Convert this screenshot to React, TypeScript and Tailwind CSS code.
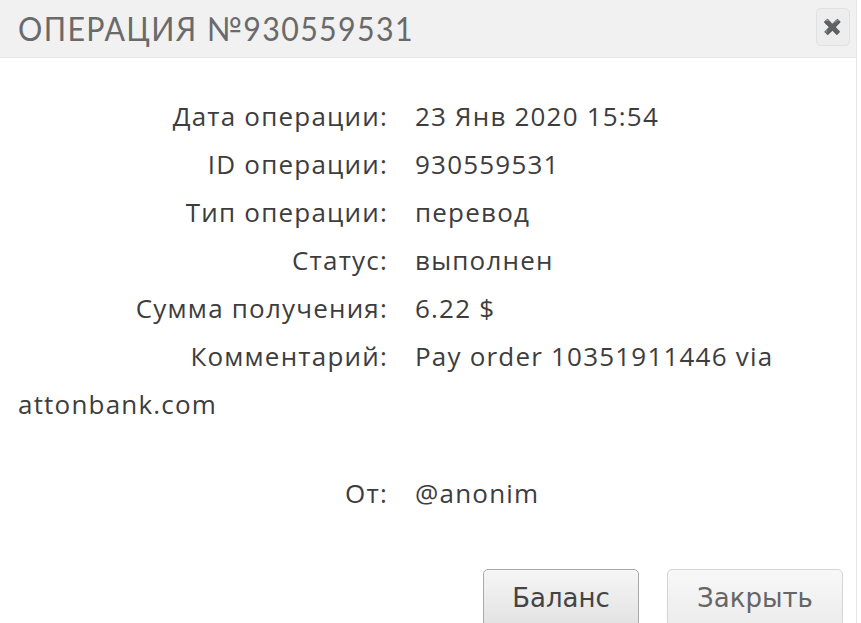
import { ReactNode } from "react"

interface RowProps {
    label: string
    children: ReactNode
}

function Row({ label, children }: RowProps) {
    return (
        <div className="flex items-center h-12">
            <div className="w-[370px] text-right shrink-0">{label}</div>
            <div className="pl-[27px]">{children}</div>
        </div>
    )
}

export default function App() {
    return (
        <div className="w-[861px] h-[623px] bg-white overflow-hidden">
            <div className="w-[857px] h-full border-r border-[#e4e4e4] flex flex-col">
                <div className="h-[58px] bg-[#f1f1f1] border-b border-[#e8e8e8] flex items-center justify-between pl-[18px] pr-[6px] shrink-0">
                    <div className="text-[33px] tracking-[1.5px] text-[#6a6a6a] uppercase font-['Lato',sans-serif] scale-x-[0.92] origin-left whitespace-nowrap">
                        Операция №930559531
                    </div>
                    <button type="button"
                        className="w-[34px] h-[38px] mb-[4px] rounded-[5px] border border-[#e0e0e0] bg-[#ededed] flex items-center justify-center text-[#666] text-[15px] font-bold">
                        ✖
                    </button>
                </div>
                <div className="pl-[18px] pt-[34px] text-[26px] tracking-[1.2px] text-[#3d3d3d] font-['Open_Sans',sans-serif]">
                    <Row label="Дата операции:">23 Янв 2020 15:54</Row>
                    <Row label="ID операции:">930559531</Row>
                    <Row label="Тип операции:">перевод</Row>
                    <Row label="Статус:">выполнен</Row>
                    <Row label="Сумма получения:">6.22 $</Row>
                    <Row label="Комментарий:">Pay order 10351911446 via</Row>
                    <div className="h-12 flex items-center">attonbank.com</div>
                    <div className="h-[41px]"></div>
                    <Row label="От:">@anonim</Row>
                </div>
                <div className="flex justify-end gap-[28px] pr-[13px] pt-[52px] font-['DejaVu_Sans',sans-serif] text-[26px]">
                    <button type="button"
                        className="w-[156px] h-[58px] shrink-0 rounded-[5px] border border-[#a9a9a9] bg-gradient-to-b from-[#f6f6f6] to-[#e2e2e2] text-[#444]">
                        Баланс
                    </button>
                    <button type="button"
                        className="w-[176px] h-[58px] shrink-0 rounded-[5px] border border-[#d4d4d4] bg-gradient-to-b from-[#f8f8f8] to-[#ececec] text-[#666]">
                        Закрыть
                    </button>
                </div>
            </div>
        </div>
    )
}
